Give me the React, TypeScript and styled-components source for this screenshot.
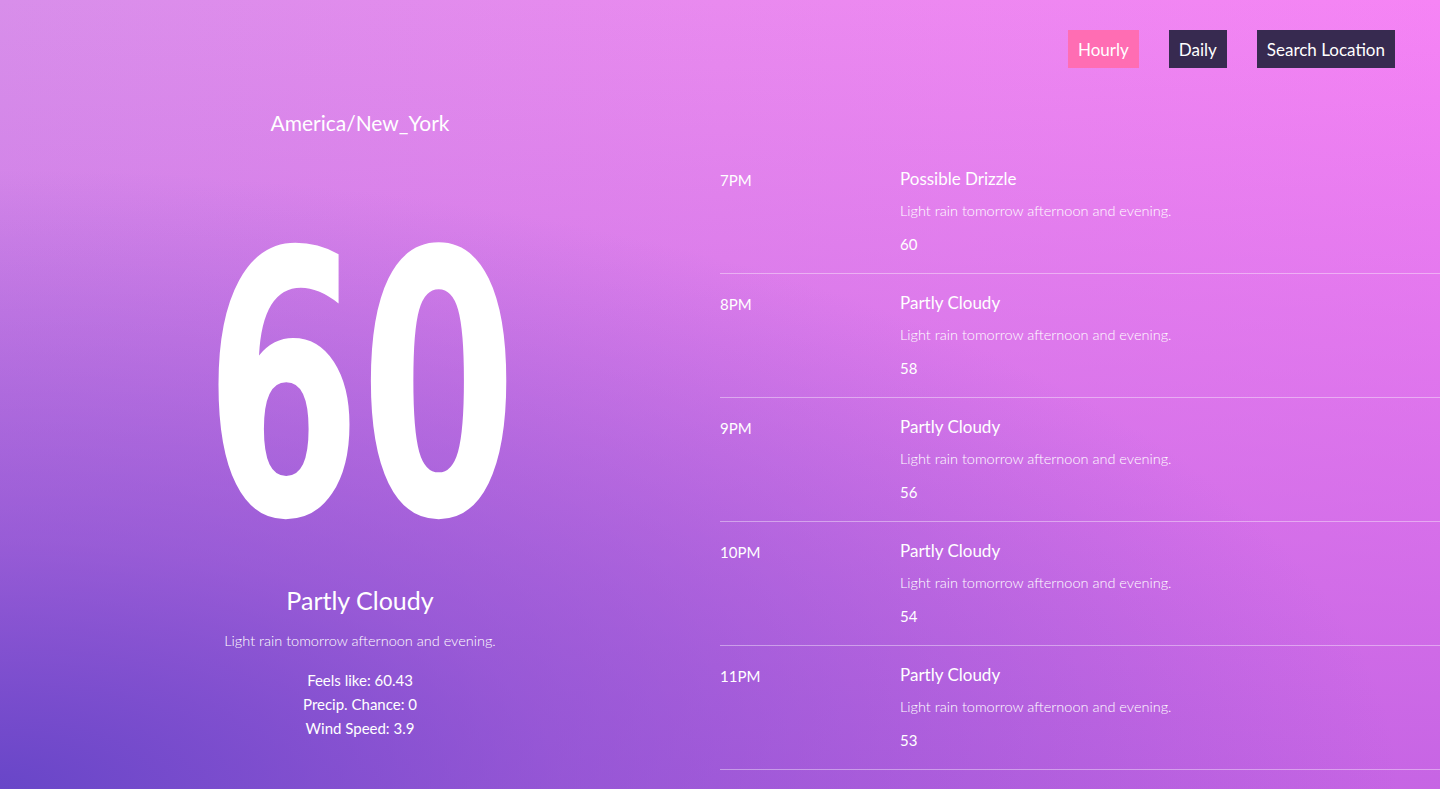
import React from "react";
import styled, { createGlobalStyle } from "styled-components";

const GlobalStyle = createGlobalStyle`
  html, body {
    margin: 0;
    padding: 0;
    height: 100%;
  }
  body {
    font-family: "Lato", "Noto Sans", sans-serif;
    color: #ffffff;
    overflow: hidden;
  }
  * { box-sizing: border-box; }
`;

const Page = styled.div`
  width: 1440px;
  height: 789px;
  display: flex;
  flex-direction: column;
  background:
    radial-gradient(ellipse 1400px 620px at 0% 100%, rgba(104, 70, 200, 1) 0%, rgba(104, 70, 200, 0.5) 40%, rgba(104, 70, 200, 0) 100%),
    linear-gradient(to bottom, rgba(190, 95, 225, 0) 0%, rgba(190, 95, 225, 0.85) 100%),
    linear-gradient(to right, #d88eea 0%, #e98aef 50%, #f684f5 100%);
  overflow: hidden;
`;

const Header = styled.header`
  display: flex;
  justify-content: flex-end;
  gap: 30px;
  padding: 30px 45px 0 0;
`;

const NavButton = styled.button<{ $active?: boolean }>`
  height: 38px;
  padding: 0 10px;
  border: none;
  border-radius: 0;
  background: ${(p) => (p.$active ? "#ff6db3" : "#372a50")};
  color: #ffffff;
  font-family: "Lato", "Noto Sans", sans-serif;
  font-size: 17px;
  font-weight: 400;
  cursor: pointer;
`;

const Body = styled.main`
  display: grid;
  grid-template-columns: 720px 720px;
  flex: 1;
`;

const Current = styled.section`
  display: flex;
  flex-direction: column;
  align-items: center;
  padding-top: 42px;
`;

const City = styled.h2`
  margin: 0;
  font-size: 21px;
  line-height: 25px;
  font-weight: 400;
`;

const BigTemp = styled.div`
  margin-top: 107px;
  font-family: "DejaVu Sans Condensed", "DejaVu Sans", sans-serif;
  font-stretch: condensed;
  font-weight: 700;
  font-size: 366px;
  line-height: 290px;
  height: 290px;
  letter-spacing: -2px;
  transform: scaleX(0.685);
`;

const Summary = styled.h1`
  margin: 52px 0 0;
  font-size: 25px;
  line-height: 32px;
  font-weight: 400;
`;

const Description = styled.p`
  margin: 16px 0 0;
  font-size: 14.5px;
  line-height: 18px;
  font-weight: 300;
`;

const Stats = styled.ul`
  list-style: none;
  margin: 18px 0 0;
  padding: 0;
  text-align: center;
  font-size: 15px;
  line-height: 24px;
`;

const HourList = styled.section`
  display: flex;
  flex-direction: column;
  padding-top: 82px;
`;

const HourRow = styled.div`
  display: grid;
  grid-template-columns: 180px 1fr;
  height: 124px;
  padding-top: 19px;
  border-bottom: 1px solid rgba(255, 255, 255, 0.4);
`;

const HourTime = styled.div`
  margin-top: 1px;
  font-size: 15px;
  line-height: 20px;
  font-weight: 400;
`;

const HourInfo = styled.div`
  display: flex;
  flex-direction: column;
  gap: 12px;
`;

const HourTitle = styled.div`
  font-size: 17px;
  line-height: 20px;
  font-weight: 400;
`;

const HourDesc = styled.div`
  font-size: 14.5px;
  line-height: 20px;
  font-weight: 300;
`;

const HourTemp = styled.div`
  margin-top: 1px;
  font-size: 15px;
  line-height: 20px;
`;

const hours = [
  { time: "7PM", summary: "Possible Drizzle", temp: 60 },
  { time: "8PM", summary: "Partly Cloudy", temp: 58 },
  { time: "9PM", summary: "Partly Cloudy", temp: 56 },
  { time: "10PM", summary: "Partly Cloudy", temp: 54 },
  { time: "11PM", summary: "Partly Cloudy", temp: 53 },
];

export default function App() {
  return (
    <>
      <GlobalStyle />
      <Page>
        <Header>
          <NavButton $active>Hourly</NavButton>
          <NavButton>Daily</NavButton>
          <NavButton>Search Location</NavButton>
        </Header>
        <Body>
          <Current>
            <City>America/New_York</City>
            <BigTemp>60</BigTemp>
            <Summary>Partly Cloudy</Summary>
            <Description>Light rain tomorrow afternoon and evening.</Description>
            <Stats>
              <li>Feels like: 60.43</li>
              <li>Precip. Chance: 0</li>
              <li>Wind Speed: 3.9</li>
            </Stats>
          </Current>
          <HourList>
            {hours.map((h) => (
              <HourRow key={h.time}>
                <HourTime>{h.time}</HourTime>
                <HourInfo>
                  <HourTitle>{h.summary}</HourTitle>
                  <HourDesc>Light rain tomorrow afternoon and evening.</HourDesc>
                  <HourTemp>{h.temp}</HourTemp>
                </HourInfo>
              </HourRow>
            ))}
          </HourList>
        </Body>
      </Page>
    </>
  );
}
